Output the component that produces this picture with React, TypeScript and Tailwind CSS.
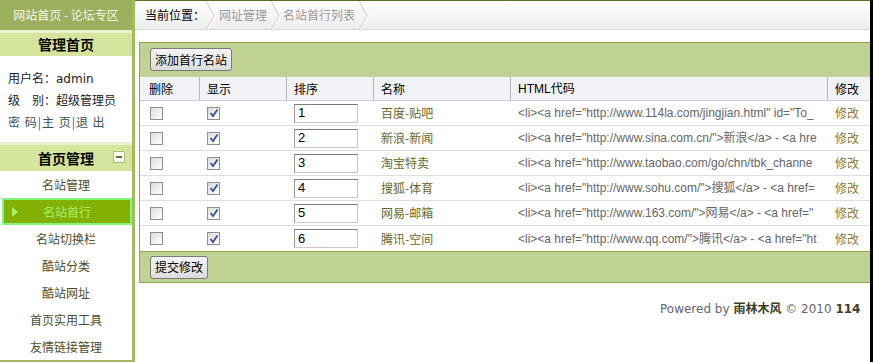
import React from "react";

const cjk = '"Noto Sans CJK SC", "Liberation Sans", sans-serif';
const latin = '"Liberation Sans", "Noto Sans CJK SC", sans-serif';
const deja = '"DejaVu Sans", "Noto Sans CJK SC", sans-serif';

function Chevron() {
  return (
    <svg width="12" height="29" viewBox="0 0 12 29" className="shrink-0">
      <polyline points="1,0 9,14.5 1,29" fill="none" stroke="#d0d0d0" strokeWidth="1" />
      <polyline points="2.5,0 10.5,14.5 2.5,29" fill="none" stroke="#ffffff" strokeWidth="1" />
    </svg>
  );
}

function Box({ checked }: { checked: boolean }) {
  return (
    <div className="w-[13px] h-[13px] border border-[#8f8f8f] bg-gradient-to-br from-[#dcdcdc] to-[#ffffff] flex items-center justify-center">
      {checked && (
        <svg width="10" height="10" viewBox="0 0 10 10">
          <path d="M1.5 5 L4 8 L8.5 1.5" fill="none" stroke="#3a4f9a" strokeWidth="1.8" />
        </svg>
      )}
    </div>
  );
}

function Btn({ children }: { children: React.ReactNode }) {
  return (
    <div
      className="h-[23px] px-[4px] flex items-center border border-[#7a7a7a] rounded-[3px] bg-gradient-to-b from-[#f6f6f6] to-[#dcdcdc] text-[12px] text-black"
      style={{ fontFamily: cjk }}
    >
      {children}
    </div>
  );
}

const rows = [
  { n: "1", name: "百度-贴吧", code: '<li><a href="http://www.114la.com/jingjian.html" id="To_' },
  { n: "2", name: "新浪-新闻", code: '<li><a href="http://www.sina.com.cn/">新浪</a> - <a hre' },
  { n: "3", name: "淘宝特卖", code: '<li><a href="http://www.taobao.com/go/chn/tbk_channe' },
  { n: "4", name: "搜狐-体育", code: '<li><a href="http://www.sohu.com/">搜狐</a> - <a href=' },
  { n: "5", name: "网易-邮箱", code: '<li><a href="http://www.163.com/">网易</a> - <a href="' },
  { n: "6", name: "腾讯-空间", code: '<li><a href="http://www.qq.com/">腾讯</a> - <a href="ht' },
];

const menu = ["名站管理", "名站首行", "名站切换栏", "酷站分类", "酷站网址", "首页实用工具", "友情链接管理"];

const grid = "grid grid-cols-[59px_87px_87px_137px_317px_60px]";

export default function App() {
  return (
    <div className="w-[873px] h-[362px] flex overflow-hidden bg-white" style={{ fontFamily: cjk }}>
      {/* Sidebar */}
      <div className="w-[135px] shrink-0 h-full flex flex-col border-r-[3px] border-[#a3b964]">
        <div className="h-[30px] bg-[#9caf5c] flex items-center justify-center text-[12px] text-[#f4f8ea]">
          网站首页 - 论坛专区
        </div>
        <div className="h-[26px] border-t-[3px] border-[#e9f1cf] bg-[#d5e59d] flex items-center justify-center text-[14px] font-bold text-black">
          管理首页
        </div>
        <div className="flex flex-col pl-[8px] pt-[14px] gap-[6px] text-[12px] text-[#222] h-[87px]">
          <div className="h-[16px] leading-[16px]">
            用户名：<span style={{ fontFamily: deja }}>admin</span>
          </div>
          <div className="h-[16px] leading-[16px]">级　别：超级管理员</div>
          <div className="h-[16px] leading-[16px] text-[#34545a] tracking-[1px]">
            密 码<span className="text-[#3355aa]">|</span>主 页<span className="text-[#3355aa]">|</span>退 出
          </div>
        </div>
        <div className="h-[29px] border-t-[3px] border-[#e9f1cf] bg-[#d5e59d] flex items-center relative">
          <div className="flex-1 text-center text-[14px] font-bold text-black">首页管理</div>
          <div className="absolute right-[7px] top-[6px] w-[12px] h-[12px] bg-white border border-[#a8c070] flex items-center justify-center">
            <div className="w-[6px] h-[2px] bg-[#5c7a20]" />
          </div>
        </div>
        <div className="flex flex-col">
          {menu.map((m, i) =>
            i === 1 ? (
              <div
                key={m}
                className="h-[27px] ml-[2px] border-[2px] border-[#86f57e] bg-[#82b004] flex items-center relative text-[12px] text-[#a6f06c]"
              >
                <svg width="6" height="10" viewBox="0 0 6 10" className="absolute left-[8px] top-[7px]">
                  <polygon points="0,0 6,5 0,10" fill="#a6f06c" />
                </svg>
                <div className="flex-1 text-center">{m}</div>
              </div>
            ) : (
              <div key={m} className="h-[27px] flex items-center justify-center text-[12px] text-[#4e4e2e]">
                {m}
              </div>
            )
          )}
        </div>
        <div className="flex-1" />
        <div className="h-[2px] bg-[#a3b964]" />
      </div>

      {/* Main */}
      <div className="flex-1 h-full flex overflow-hidden">
        <div className="flex-1 h-full flex flex-col overflow-hidden">
          <div className="h-[30px] shrink-0 border-t border-[#5d6d2c] border-b border-b-[#d8d8d8] bg-gradient-to-b from-[#ffffff] to-[#ededed] flex items-center text-[12px]">
            <div className="pl-[10px] text-black">当前位置：</div>
            <Chevron />
            <div className="pl-[2px] pr-[3px] text-[#9a9a9a]">网址管理</div>
            <Chevron />
            <div className="pl-[1px] pr-[3px] text-[#9a9a9a]">名站首行列表</div>
            <Chevron />
          </div>

          <div className="ml-[4px] mt-[12px] w-[745px] shrink-0 border-l border-t border-b border-[#8ea650]">
            <div className="h-[33px] bg-[#bfd294] flex items-center pl-[10px]">
              <Btn>添加首行名站</Btn>
            </div>
            <div className={`${grid} h-[25px] bg-[#f1f3f6] border-t border-[#c8d4a8] border-b border-b-[#d0d0d0] text-[12px] text-black`}>
              <div className="pl-[9px] flex items-center">删除</div>
              <div className="pl-[7px] flex items-center border-l border-[#b8b8b8]">显示</div>
              <div className="pl-[7px] flex items-center border-l border-[#b8b8b8]">排序</div>
              <div className="pl-[7px] flex items-center border-l border-[#b8b8b8]">名称</div>
              <div className="pl-[7px] flex items-center border-l border-[#b8b8b8]" style={{ fontFamily: latin }}>
                HTML代码
              </div>
              <div className="pl-[7px] flex items-center border-l border-[#b8b8b8]">修改</div>
            </div>
            {rows.map((r, i) => (
              <div
                key={r.n}
                className={`${grid} h-[25px] bg-white text-[12px] ${i < rows.length - 1 ? "border-b border-[#dedede]" : ""}`}
              >
                <div className="pl-[10px] flex items-center">
                  <Box checked={false} />
                </div>
                <div className="pl-[8px] flex items-center">
                  <Box checked={true} />
                </div>
                <div className="pl-[8px] flex items-center">
                  <div
                    className="w-[64px] h-[19px] border border-[#c8c8c8] border-t-[#7b7b7b] border-l-[#9a9a9a] pl-[3px] flex items-center text-[13px] text-black"
                    style={{ fontFamily: latin }}
                  >
                    {r.n}
                  </div>
                </div>
                <div className="pl-[8px] flex items-center text-[#68682a]">{r.name}</div>
                <div className="min-w-0 pl-[8px] pr-[9px] flex items-center">
                  <div
                    className="w-[300px] overflow-hidden whitespace-nowrap text-[#666]"
                    style={{ fontFamily: latin }}
                  >
                    {r.code}
                  </div>
                </div>
                <div className="pl-[8px] flex items-center text-[#8c7c34]">修改</div>
              </div>
            ))}
            <div className="h-[31px] bg-[#bfd294] border-t border-[#8ea650] flex items-center pl-[10px]">
              <Btn>提交修改</Btn>
            </div>
          </div>

          <div
            className="mt-[18px] pl-[525px] whitespace-nowrap text-[12px] text-[#666] h-[16px] leading-[16px]"
            style={{ fontFamily: deja }}
          >
            Powered by <b className="text-[#3e3e1e]">雨林木风</b> © 2010 <b className="text-[#3e3e1e]">114</b>
          </div>
        </div>
        <div className="w-[3px] h-full bg-black shrink-0" />
      </div>
    </div>
  );
}
